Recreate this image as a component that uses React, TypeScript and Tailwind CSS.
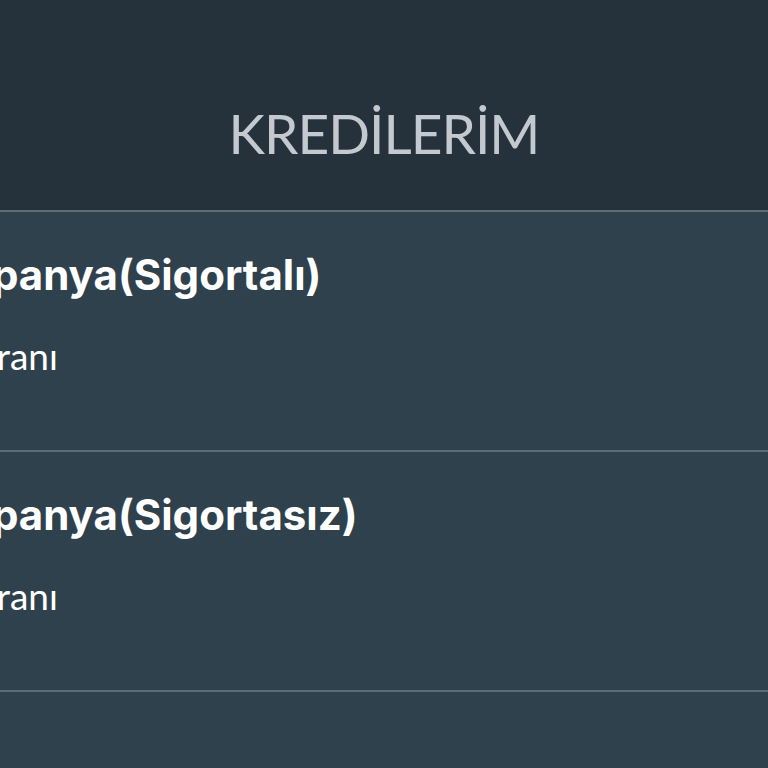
const LOANS = [
  { name: 'Kampanya(Sigortalı)', rate: 'Faiz oranı' },
  { name: 'Kampanya(Sigortasız)', rate: 'Faiz oranı' },
]

function LoanRow({ name, rate }: { name: string; rate: string }) {
  return (
    <div className="h-[240px] border-b-2 border-[#5d6b76] overflow-hidden pt-[42px] bg-[#30414e]">
      <div className="-ml-[101px] whitespace-nowrap font-['Inter',sans-serif] text-[42px] leading-none font-bold text-white">
        {name}
      </div>
      <div className="mt-[41px] -ml-[96px] whitespace-nowrap font-['Lato',sans-serif] text-[37px] leading-none text-white">
        {rate}
      </div>
    </div>
  )
}

export default function App() {
  return (
    <div className="w-[768px] h-[768px] overflow-hidden bg-[#30414e] font-['Lato',sans-serif]">
      <header className="h-[212px] border-b-2 border-[#5d6b76] bg-[#25323c] pt-[106px] text-center">
        <h1 className="text-[55px] leading-none font-normal tracking-[-1px] text-[#c3c9ce]">KREDİLERİM</h1>
      </header>
      {LOANS.map((loan) => (
        <LoanRow key={loan.name} {...loan} />
      ))}
    </div>
  )
}
